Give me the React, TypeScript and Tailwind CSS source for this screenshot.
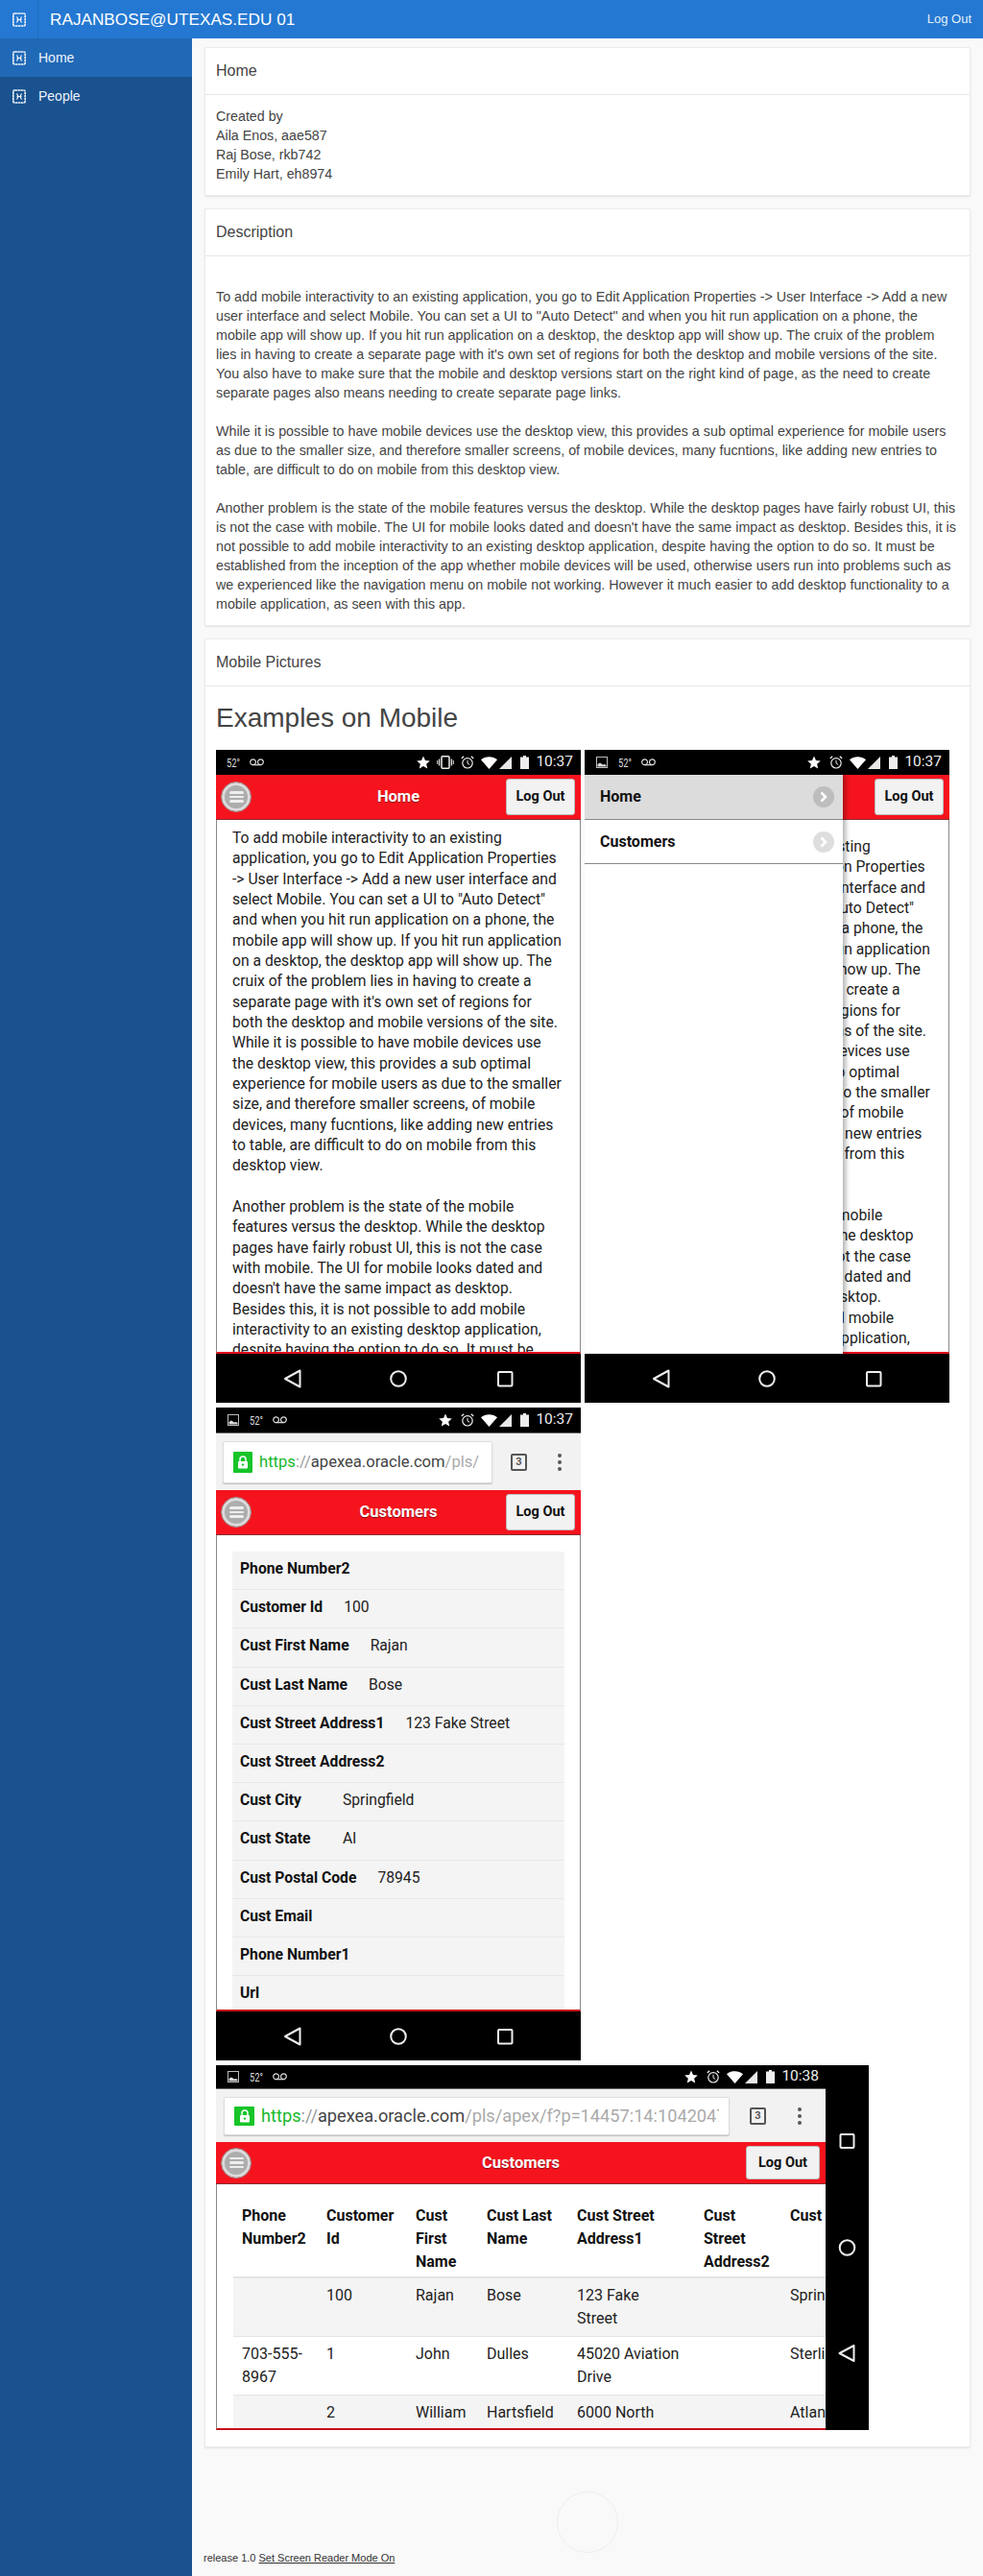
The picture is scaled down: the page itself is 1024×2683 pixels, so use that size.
import React from "react";

const Glyph = () => (
  <svg width="14" height="15" viewBox="0 0 14 15" className="shrink-0">
    <rect x="0.8" y="1" width="12.4" height="13" rx="1.5" fill="none" stroke="#eef3fa" strokeWidth="1.6" strokeDasharray="2.6 0.4" />
    <path d="M4.5 4.5 L6 7.5 L4.5 10.5 M9.5 4.5 L8 7.5 L9.5 10.5 M4.5 7.5 H9.5" fill="none" stroke="#eef3fa" strokeWidth="1.2" />
  </svg>
);

const ImgIcon = () => (
  <svg width="12" height="12" viewBox="0 0 12 12" className="shrink-0">
    <rect x="0.5" y="0.5" width="11" height="11" fill="none" stroke="#bbb" />
    <path d="M1.5 10.5 V8 L4 6.5 L7 8.5 L9 8 L10.5 9 V10.5 Z" fill="#ddd" />
  </svg>
);
const Voicemail = () => (
  <svg width="15" height="8" viewBox="0 0 15 8" className="shrink-0">
    <circle cx="3.6" cy="3.8" r="2.9" fill="none" stroke="#ddd" strokeWidth="1.2" />
    <circle cx="11.4" cy="3.8" r="2.9" fill="none" stroke="#ddd" strokeWidth="1.2" />
    <path d="M3.6 6.7 H11.4" stroke="#ddd" strokeWidth="1.2" />
  </svg>
);
const Star = () => (
  <svg width="14" height="14" viewBox="0 0 24 24" className="shrink-0">
    <path d="M12 1 L15.4 8.6 L23.6 9.4 L17.4 14.9 L19.2 23 L12 18.8 L4.8 23 L6.6 14.9 L0.4 9.4 L8.6 8.6 Z" fill="#fff" />
  </svg>
);
const Vibrate = () => (
  <svg width="18" height="14" viewBox="0 0 18 14" className="shrink-0">
    <rect x="5" y="0.8" width="8" height="12.4" rx="1" fill="none" stroke="#eee" strokeWidth="1.5" />
    <path d="M2.6 3.5 V10.5 M15.4 3.5 V10.5" stroke="#ddd" strokeWidth="1.4" />
    <path d="M0.6 5 V9 M17.4 5 V9" stroke="#bbb" strokeWidth="1.2" />
  </svg>
);
const Alarm = () => (
  <svg width="14" height="14" viewBox="0 0 14 14" className="shrink-0">
    <circle cx="7" cy="7.8" r="5.2" fill="none" stroke="#eee" strokeWidth="1.2" />
    <path d="M7 4.8 V8 L9.2 9.4" fill="none" stroke="#eee" strokeWidth="1" />
    <path d="M0.8 3 L3.2 0.8 M13.2 3 L10.8 0.8" stroke="#eee" strokeWidth="1.3" />
  </svg>
);
const Wifi = () => (
  <svg width="17" height="13" viewBox="0 0 17 13" className="shrink-0">
    <path d="M0 3.2 C4.5 -0.8 12.5 -0.8 17 3.2 L8.5 13 Z" fill="#fff" />
  </svg>
);
const Cell = () => (
  <svg width="13" height="13" viewBox="0 0 13 13" className="shrink-0">
    <path d="M13 0 V13 H0 Z" fill="#e8e8e8" />
  </svg>
);
const Battery = () => (
  <svg width="9" height="14" viewBox="0 0 9 14" className="shrink-0">
    <path d="M3 0 H6 V1.4 H9 V14 H0 V1.4 H3 Z" fill="#eee" />
  </svg>
);

const StatusBar = ({ image, vibrate, time, cls }: { image?: boolean; vibrate?: boolean; time: string; cls: string }) => (
  <div className={`flex items-center bg-black shrink-0 ${cls}`}>
    {image && <ImgIcon />}
    <span className={`-mr-[5px] text-[13px] leading-none text-[#ddd] font-['Roboto',sans-serif] origin-left scale-x-[0.72] whitespace-nowrap shrink-0 ${image ? "ml-[11px]" : ""}`}>52°</span>
    <span className="ml-[10px]"><Voicemail /></span>
    <div className="ml-auto flex items-center">
      <Star />
      {vibrate && <span className="ml-[7px]"><Vibrate /></span>}
      <span className={vibrate ? "ml-[7px]" : "ml-[9px]"}><Alarm /></span>
      <span className="ml-[7px]"><Wifi /></span>
      <span className="ml-[2px]"><Cell /></span>
      <span className="ml-[9px]"><Battery /></span>
      <span className="ml-[7px] text-[15.5px] leading-none text-[#eee] font-['Roboto',sans-serif]">{time}</span>
    </div>
  </div>
);

const Burger = () => (
  <div className="w-[30px] h-[30px] rounded-full bg-[#adadad] border-[3px] border-[#dcdcdc] outline outline-1 outline-[#999] flex flex-col items-center justify-center gap-[2px] shrink-0">
    <span className="block w-[15px] h-[2.5px] rounded-sm bg-[#eee]" />
    <span className="block w-[15px] h-[2.5px] rounded-sm bg-[#eee]" />
    <span className="block w-[15px] h-[2.5px] rounded-sm bg-[#eee]" />
  </div>
);

const RedBar = ({ title, cls, btn }: { title?: string; cls: string; btn: string }) => (
  <div className={`relative flex items-center justify-between bg-[#f5141e] border-b border-[#8c2b2f] shrink-0 pl-[6px] pr-[6px] ${cls}`}>
    <Burger />
    {title && <span className="absolute inset-x-0 text-center text-[16.5px] font-bold text-white font-['Roboto',sans-serif] [text-shadow:0_1px_1px_rgba(0,0,0,0.45)]">{title}</span>}
    <span className={`relative flex items-center justify-center bg-[#f2f2f2] border border-[#bbb] rounded-[3px] text-[14.5px] font-bold text-[#111] font-['Roboto',sans-serif] ${btn}`}>Log Out</span>
  </div>
);

const NavBar = () => (
  <svg viewBox="0 0 380 51" className="block w-[380px] h-[51px] bg-black shrink-0">
    <path d="M87.5 17.5 V34.5 L72 26 Z" fill="none" stroke="#eee" strokeWidth="2" strokeLinejoin="round" />
    <circle cx="190" cy="26" r="7.8" fill="none" stroke="#eee" strokeWidth="2" />
    <rect x="294" y="19" width="14.5" height="14.5" rx="1" fill="none" stroke="#eee" strokeWidth="2" />
  </svg>
);

const Url = ({ cls, rest, text, lock }: { cls: string; rest: string; text: string; lock: string }) => (
  <div className={`flex items-center bg-white border border-[#ddd] rounded-[2px] shadow-[0_1px_1px_rgba(0,0,0,0.2)] overflow-hidden ${cls}`}>
    <span className={`flex items-center justify-center bg-[#17c429] rounded-[1px] shrink-0 ml-[10px] ${lock}`}>
      <svg width="12" height="14" viewBox="0 0 12 14">
        <path d="M3 6 V4 A3 3 0 0 1 9 4 V6" fill="none" stroke="#fff" strokeWidth="1.5" />
        <rect x="1" y="6" width="10" height="7.5" rx="1" fill="#fff" />
        <circle cx="6" cy="9.6" r="1.2" fill="#17c429" />
      </svg>
    </span>
    <span className={`ml-[7px] whitespace-nowrap font-['Roboto',sans-serif] overflow-hidden ${text}`}>
      <span className="text-[#17b82a]">https</span><span className="text-[#999]">://</span><span className="text-[#444]">apexea.oracle.com</span><span className="text-[#aaa]">{rest}</span>
    </span>
  </div>
);

const TabIcon = () => (
  <span className="flex items-center justify-center w-[17px] h-[18px] border-2 border-[#555] rounded-[2px] text-[11px] font-bold text-[#555] font-['Roboto',sans-serif] shrink-0">3</span>
);
const Dots = () => (
  <span className="flex flex-col gap-[3px] shrink-0">
    <span className="w-[4px] h-[4px] rounded-full bg-[#555]" />
    <span className="w-[4px] h-[4px] rounded-full bg-[#555]" />
    <span className="w-[4px] h-[4px] rounded-full bg-[#555]" />
  </span>
);

const MobileText = () => (
  <div className="text-[15.7px] leading-[21.33px] text-[#222] font-['Roboto',sans-serif]">
    <p>
      To add mobile interactivity to an existing application, you go to Edit Application Properties <span className="whitespace-nowrap">-&gt;</span> User Interface <span className="whitespace-nowrap">-&gt;</span> Add a new user interface and select Mobile. You can set a UI to "Auto Detect" and when you hit run application on a phone, the mobile app will show up. If you hit run application on a desktop, the desktop app will show up. The cruix of the problem lies in having to create a separate page with it's own set of regions for both the desktop and mobile versions of the site. While it is possible to have mobile devices use the desktop view, this provides a sub optimal experience for mobile users as due to the smaller size, and therefore smaller screens, of mobile devices, many fucntions, like adding new entries to table, are difficult to do on mobile from this desktop view.
    </p>
    <p className="mt-[21.33px]">
      Another problem is the state of the mobile features versus the desktop. While the desktop pages have fairly robust UI, this is not the case with mobile. The UI for mobile looks dated and doesn't have the same impact as desktop. Besides this, it is not possible to add mobile interactivity to an existing desktop application, despite having the option to do so. It must be established from the inception of the app whether mobile devices will be used.
    </p>
  </div>
);

const Chevron = ({ bg }: { bg: string }) => (
  <span className={`flex items-center justify-center w-[22px] h-[22px] rounded-full ${bg}`}>
    <svg width="10" height="12" viewBox="0 0 10 12"><path d="M2.5 1.5 L7 6 L2.5 10.5" fill="none" stroke="#fff" strokeWidth="2.6" /></svg>
  </span>
);

const PhoneOne = () => (
  <div className="flex flex-col w-[380px] h-[680px]">
    <StatusBar vibrate time="10:37" cls="h-[26px] pl-[11px] pr-[8px]" />
    <RedBar title="Home" cls="h-[47px]" btn="w-[72px] h-[38px]" />
    <div className="flex-1 overflow-hidden border-x border-[#888] border-b-2 border-b-[#e2101c] pl-[16px] pr-[16px] pt-[8px]">
      <MobileText />
    </div>
    <NavBar />
  </div>
);

const PhoneTwo = () => (
  <div className="flex flex-col w-[380px] h-[680px]">
    <StatusBar image time="10:37" cls="h-[26px] pl-[12px] pr-[8px]" />
    <div className="relative flex-1 flex flex-col min-h-0">
      <RedBar cls="h-[47px]" btn="w-[72px] h-[38px]" />
      <div className="flex-1 overflow-hidden border-x border-[#888] border-b-2 border-b-[#e2101c] pl-[16px] pr-[16px] pt-[17px]">
        <MobileText />
      </div>
      <div className="absolute left-0 top-0 bottom-0 w-[269px] bg-white shadow-[3px_0_5px_rgba(0,0,0,0.3)] font-['Roboto',sans-serif] text-[16px] font-bold text-[#111]">
        <div className="flex items-center justify-between h-[47px] bg-[#dcdcdc] border-b border-[#888] pl-[16px] pr-[9px]">
          Home <Chevron bg="bg-[#bdbdbd]" />
        </div>
        <div className="flex items-center justify-between h-[46px] border-b border-[#888] pl-[16px] pr-[9px]">
          Customers <Chevron bg="bg-[#dedede]" />
        </div>
      </div>
    </div>
    <NavBar />
  </div>
);

const fields: [string, string][] = [
  ["Phone Number2", ""],
  ["Customer Id", "100"],
  ["Cust First Name", "Rajan"],
  ["Cust Last Name", "Bose"],
  ["Cust Street Address1", "123 Fake Street"],
  ["Cust Street Address2", ""],
  ["Cust City", "Springfield"],
  ["Cust State", "Al"],
  ["Cust Postal Code", "78945"],
  ["Cust Email", ""],
  ["Phone Number1", ""],
  ["Url", ""],
];

const PhoneThree = () => (
  <div className="flex flex-col w-[380px] h-[680px]">
    <StatusBar image time="10:37" cls="h-[26px] pl-[12px] pr-[8px]" />
    <div className="flex items-center h-[60px] bg-[#f2f2f2] border-t border-[#666] shrink-0 pl-[7px]">
      <Url cls="w-[281px] h-[44px]" rest="/pls/" text="text-[16.6px] w-[233px]" lock="w-[20px] h-[22px]" />
      <span className="ml-[19px]"><TabIcon /></span>
      <span className="ml-[32px]"><Dots /></span>
    </div>
    <RedBar title="Customers" cls="h-[47px]" btn="w-[72px] h-[38px]" />
    <div className="flex-1 overflow-hidden border-x border-[#888] border-b-2 border-b-[#c8101a] pl-[16px] pr-[16px] pt-[17px] font-['Roboto',sans-serif] text-[15.7px] text-[#222]">
      <div className="bg-[#f4f4f4]">
        {fields.map(([k, v]) => (
          <div key={k} className="flex items-center h-[40.2px] border-b border-[#e8e8e8] pl-[8px] pb-[3px]">
            <span className="font-bold text-[#111] min-w-[85px] mr-[22px] whitespace-nowrap">{k}</span>
            <span>{v}</span>
          </div>
        ))}
      </div>
    </div>
    <NavBar />
  </div>
);

const heads = ["Phone Number2", "Customer Id", "Cust First Name", "Cust Last Name", "Cust Street Address1", "Cust Street Address2", "Cust City"];
const rows: React.ReactNode[][] = [
  ["", "100", "Rajan", "Bose", <>123 Fake<br />Street</>, "", "Springfield"],
  [<>703-555-<br />8967</>, "1", "John", "Dulles", <>45020 Aviation<br />Drive</>, "", "Sterling"],
  ["", "2", "William", "Hartsfield", <>6000 North<br />Terminal</>, "", "Atlanta"],
];
const widths = ["w-[88px]", "w-[93px]", "w-[74px]", "w-[94px]", "w-[132px]", "w-[90px]", "w-[129px]"];

const PhoneFour = () => (
  <div className="flex flex-col w-[680px] h-[380px]">
    <StatusBar image time="10:38" cls="h-[24px] pl-[12px] pr-[52px]" />
    <div className="flex flex-1 min-h-0">
      <div className="flex flex-col w-[635px] min-w-0">
        <div className="flex items-center h-[56px] bg-[#f2f2f2] border-t border-[#666] shrink-0 pl-[8px]">
          <Url cls="w-[527px] h-[40px]" rest="/pls/apex/f?p=14457:14:1042047" text="text-[18.2px] w-[477px]" lock="w-[21px] h-[20px]" />
          <span className="ml-[21px]"><TabIcon /></span>
          <span className="ml-[33px]"><Dots /></span>
        </div>
        <RedBar title="Customers" cls="h-[44px]" btn="w-[77px] h-[35px]" />
        <div className="flex-1 overflow-hidden border-l border-[#888] border-b-2 border-b-[#c8101a] pl-[17px] pt-[21px] font-['Roboto',sans-serif] text-[16px] leading-[24px] text-[#222]">
          <table className="table-fixed w-[700px] border-collapse">
            <thead>
              <tr className="border-b-2 border-[#e4e4e4]">
                {heads.map((h, i) => (
                  <th key={h} className={`${widths[i]} pl-[9px] pr-[6px] pb-[3px] text-left align-top font-bold text-[#111]`}>{h}</th>
                ))}
              </tr>
            </thead>
            <tbody>
              {rows.map((r, i) => (
                <tr key={i} className={`${i % 2 === 0 ? "bg-[#f4f4f4]" : "bg-white"} border-b border-[#e4e4e4]`}>
                  {r.map((c, j) => (
                    <td key={j} className="pl-[9px] pt-[6px] pb-[6px] align-top">{c}</td>
                  ))}
                </tr>
              ))}
            </tbody>
          </table>
        </div>
      </div>
      <svg viewBox="0 0 45 356" className="w-[45px] h-[356px] bg-black shrink-0">
        <rect x="15.5" y="48" width="14" height="14" rx="1" fill="none" stroke="#eee" strokeWidth="2" />
        <circle cx="22.5" cy="166" r="7.8" fill="none" stroke="#eee" strokeWidth="2" />
        <path d="M29.5 268 V284 L14.5 276 Z" fill="none" stroke="#eee" strokeWidth="2" strokeLinejoin="round" />
      </svg>
    </div>
  </div>
);

const Card = ({ title, children, body }: { title: string; children: React.ReactNode; body: string }) => (
  <section className="bg-white border border-[#ececec] rounded-[2px] shadow-[0_1px_2px_rgba(0,0,0,0.1)]">
    <h2 className="h-[49px] flex items-center px-[11px] border-b border-[#e6e6e6] text-[16px] text-[#444]">{title}</h2>
    <div className={body}>{children}</div>
  </section>
);

export default function App() {
  return (
    <div className="min-h-[2683px] flex flex-col bg-[#f9f9f9] font-['Liberation_Sans',Arial,sans-serif] text-[14px] leading-[20px] text-[#444]">
      <header className="flex items-center h-[40px] bg-[#2478d1] text-white shrink-0">
        <div className="flex items-center justify-center w-[40px] h-[40px] border-r border-[#1f6dbf] shrink-0"><Glyph /></div>
        <span className="ml-[12px] text-[17.2px]">RAJANBOSE@UTEXAS.EDU 01</span>
        <span className="ml-auto mr-[12px] text-[13px] text-[#e4eefa]">Log Out</span>
      </header>
      <div className="flex flex-1">
        <nav className="w-[200px] bg-[#19528f] text-[14px] text-[#eef3fa] shrink-0">
          <div className="flex items-center h-[40px] bg-[#2069b6] pl-[13px] gap-[13px]"><Glyph />Home</div>
          <div className="flex items-center h-[40px] pl-[13px] gap-[13px]"><Glyph />People</div>
        </nav>
        <main className="flex-1 min-w-0 pl-[13px] pr-[13px] pt-[9px] flex flex-col gap-[13px]">
          <Card title="Home" body="px-[11px] py-[12px] text-[14.25px]">
            Created by<br />Aila Enos, aae587<br />Raj Bose, rkb742<br />Emily Hart, eh8974
          </Card>
          <Card title="Description" body="px-[11px] pt-[32px] pb-[12px] text-[14.3px]">
            <p>To add mobile interactivity to an existing application, you go to Edit Application Properties -&gt; User Interface -&gt; Add a new user interface and select Mobile. You can set a UI to "Auto Detect" and when you hit run application on a phone, the mobile app will show up. If you hit run application on a desktop, the desktop app will show up. The cruix of the problem<br />lies in having to create a separate page with it's own set of regions for both the desktop and mobile versions of the site. You also have to make sure that the mobile and desktop versions start on the right kind of page, as the need to create separate pages also means needing to create separate page links.</p>
            <p className="mt-[20px]">While it is possible to have mobile devices use the desktop view, this provides a sub optimal experience for mobile users as due to the smaller size, and therefore smaller screens, of mobile devices, many fucntions, like adding new entries to table, are difficult to do on mobile from this desktop view.</p>
            <p className="mt-[20px]">Another problem is the state of the mobile features versus the desktop. While the desktop pages have fairly robust UI, this is not the case with mobile. The UI for mobile looks dated and doesn't have the same impact as desktop. Besides this, it is not possible to add mobile interactivity to an existing desktop application, despite having the option to do so. It must be established from the inception of the app whether mobile devices will be used, otherwise users run into problems such as we experienced like the navigation menu on mobile not working. However it much easier to add desktop functionality to a mobile application, as seen with this app.</p>
          </Card>
          <Card title="Mobile Pictures" body="px-[11px] pt-[12px] pb-[17px]">
            <h1 className="text-[28px] leading-[42px] mb-[12px] text-[#444]">Examples on Mobile</h1>
            <div className="flex flex-wrap gap-x-[4px] gap-y-[5px]">
              <PhoneOne />
              <PhoneTwo />
              <PhoneThree />
              <PhoneFour />
            </div>
          </Card>
          <footer className="relative mt-[95px] pb-[14px] -ml-px text-[11px] leading-[14px] text-[#333]">
            <span className="absolute left-1/2 -translate-x-1/2 -top-[62px] w-[64px] h-[64px] rounded-full border border-[#eeeeee]" />
            release 1.0 <span className="underline">Set Screen Reader Mode On</span>
          </footer>
        </main>
      </div>
    </div>
  );
}
